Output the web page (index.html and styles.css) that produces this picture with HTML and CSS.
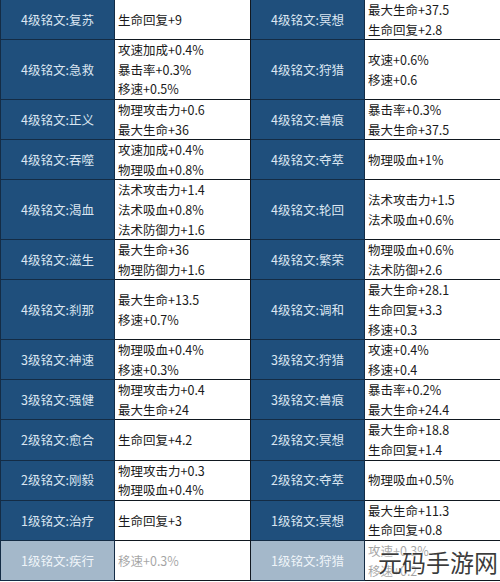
FILE: index.html
```html
<!DOCTYPE html>
<html lang="zh-CN">
<head>
<meta charset="utf-8">
<title>铭文属性表</title>
<link rel="stylesheet" href="styles.css">
</head>
<body>
<div class="wrap">
<table class="runes">
  <colgroup>
    <col class="c-label"><col class="c-val"><col class="c-label"><col class="c-val">
  </colgroup>
  <tbody>
    <tr>
      <td class="label">4级铭文:复苏</td><td class="val">生命回复+9</td>
      <td class="label">4级铭文:冥想</td><td class="val">最大生命+37.5<br>生命回复+2.8</td>
    </tr>
    <tr>
      <td class="label">4级铭文:急救</td><td class="val">攻速加成+0.4%<br>暴击率+0.3%<br>移速+0.5%</td>
      <td class="label">4级铭文:狩猎</td><td class="val">攻速+0.6%<br>移速+0.6</td>
    </tr>
    <tr>
      <td class="label">4级铭文:正义</td><td class="val">物理攻击力+0.6<br>最大生命+36</td>
      <td class="label">4级铭文:兽痕</td><td class="val">暴击率+0.3%<br>最大生命+37.5</td>
    </tr>
    <tr>
      <td class="label">4级铭文:吞噬</td><td class="val">攻速加成+0.4%<br>物理吸血+0.8%</td>
      <td class="label">4级铭文:夺萃</td><td class="val">物理吸血+1%</td>
    </tr>
    <tr>
      <td class="label">4级铭文:渴血</td><td class="val">法术攻击力+1.4<br>法术吸血+0.8%<br>法术防御力+1.6</td>
      <td class="label">4级铭文:轮回</td><td class="val">法术攻击力+1.5<br>法术吸血+0.6%</td>
    </tr>
    <tr>
      <td class="label">4级铭文:滋生</td><td class="val">最大生命+36<br>物理防御力+1.6</td>
      <td class="label">4级铭文:繁荣</td><td class="val">物理吸血+0.6%<br>法术防御+2.6</td>
    </tr>
    <tr>
      <td class="label">4级铭文:刹那</td><td class="val">最大生命+13.5<br>移速+0.7%</td>
      <td class="label">4级铭文:调和</td><td class="val">最大生命+28.1<br>生命回复+3.3<br>移速+0.3</td>
    </tr>
    <tr>
      <td class="label">3级铭文:神速</td><td class="val">物理吸血+0.4%<br>移速+0.3%</td>
      <td class="label">3级铭文:狩猎</td><td class="val">攻速+0.4%<br>移速+0.4</td>
    </tr>
    <tr>
      <td class="label">3级铭文:强健</td><td class="val">物理攻击力+0.4<br>最大生命+24</td>
      <td class="label">3级铭文:兽痕</td><td class="val">暴击率+0.2%<br>最大生命+24.4</td>
    </tr>
    <tr>
      <td class="label">2级铭文:愈合</td><td class="val">生命回复+4.2</td>
      <td class="label">2级铭文:冥想</td><td class="val">最大生命+18.8<br>生命回复+1.4</td>
    </tr>
    <tr>
      <td class="label">2级铭文:刚毅</td><td class="val">物理攻击力+0.3<br>物理吸血+0.4%</td>
      <td class="label">2级铭文:夺萃</td><td class="val">物理吸血+0.5%</td>
    </tr>
    <tr>
      <td class="label">1级铭文:治疗</td><td class="val">生命回复+3</td>
      <td class="label">1级铭文:冥想</td><td class="val">最大生命+11.3<br>生命回复+0.8</td>
    </tr>
    <tr class="faded">
      <td class="label">1级铭文:疾行</td><td class="val">移速+0.3%</td>
      <td class="label">1级铭文:狩猎</td><td class="val">攻速+0.3%<br>移速+0.2</td>
    </tr>
  </tbody>
</table>
<div class="watermark">元码手游网</div>
</div>
</body>
</html>
```

FILE: styles.css
```css
html, body {
  margin: 0;
  padding: 0;
  background: #ffffff;
}
body {
  font-family: "Noto Sans CJK SC", "Noto Sans", sans-serif;
  overflow: hidden;
}
.wrap {
  position: relative;
  width: 500px;
  height: 582px;
  overflow: hidden;
}
.runes {
  border-collapse: collapse;
  table-layout: fixed;
  width: 500px;
  margin-top: -1px;
}
.c-label { width: 114px; }
.c-val { width: 136px; }
.runes td {
  border: 1px solid #111820;
  padding: 0;
  font-size: 12.5px;
  line-height: 19.6px;
  vertical-align: middle;
  height: 39px;
}
.label {
  background: #1f4f7c;
  color: #dbe6f1;
  text-align: center;
  border-color: #142c45 !important;
}
.val {
  background: #ffffff;
  color: #1b1b1b;
  padding-left: 3px !important;
  white-space: nowrap;
}
.faded td {
  opacity: 0.4;
}
.watermark {
  position: absolute;
  right: 2px;
  bottom: 5px;
  font-size: 24px;
  line-height: 30px;
  color: rgba(30, 30, 30, 0.88);
  text-shadow: 0 0 2px #ffffff, 0 0 3px #ffffff;
}
```
